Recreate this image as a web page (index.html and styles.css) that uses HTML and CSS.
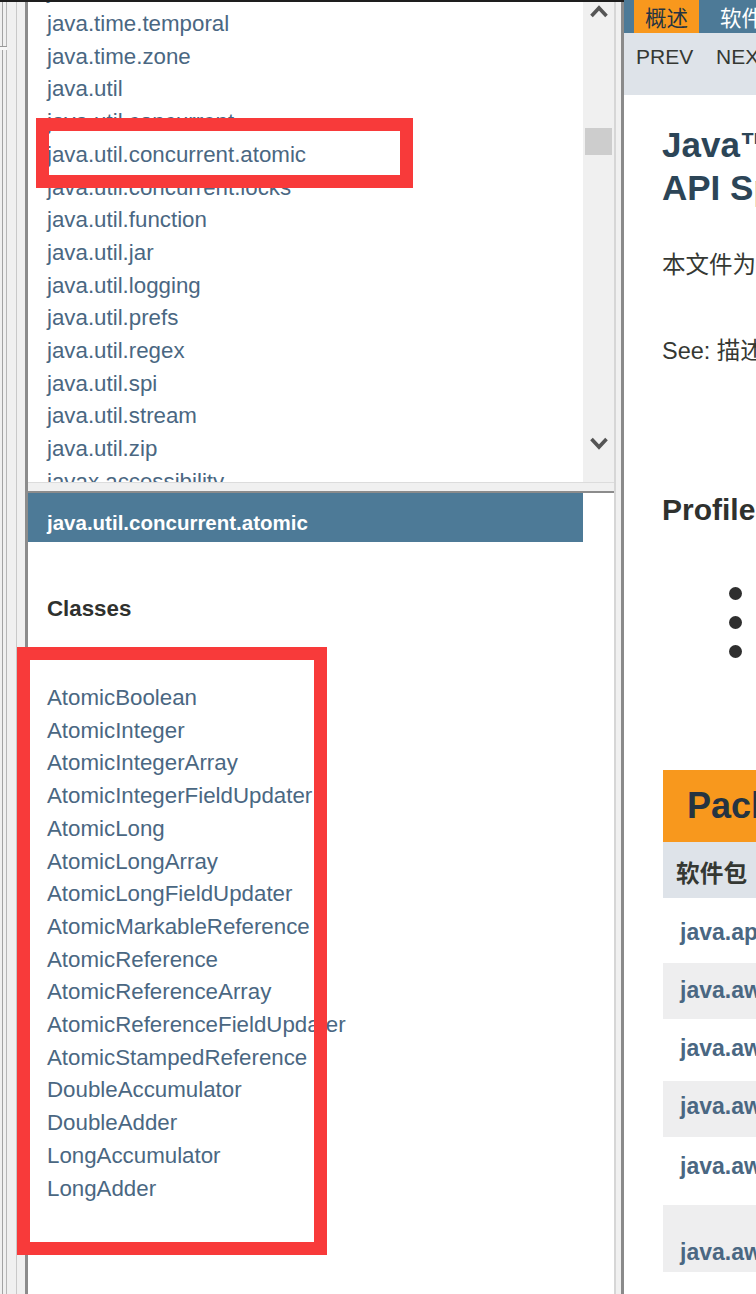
FILE: index.html
```html
<!DOCTYPE html>
<html lang="zh">
<head>
<meta charset="utf-8">
<title>Java Platform SE 8</title>
<link rel="stylesheet" href="styles.css">
</head>
<body>
<div class="window">
  <div class="left-side">
    <div class="gutter"><div class="gutter-cap"></div></div>
    <div class="frames">
      <div class="pkg-frame">
        <div class="pkg-list">
          <ul>
            <li>java.time.format</li>
            <li>java.time.temporal</li>
            <li>java.time.zone</li>
            <li>java.util</li>
            <li>java.util.concurrent</li>
            <li>java.util.concurrent.atomic</li>
            <li>java.util.concurrent.locks</li>
            <li>java.util.function</li>
            <li>java.util.jar</li>
            <li>java.util.logging</li>
            <li>java.util.prefs</li>
            <li>java.util.regex</li>
            <li>java.util.spi</li>
            <li>java.util.stream</li>
            <li>java.util.zip</li>
            <li>javax.accessibility</li>
          </ul>
        </div>
        <div class="scrollbar">
          <div class="sb-up">
            <svg width="20" height="16" viewBox="0 0 20 16"><polyline points="2.5,13 10,5 17.5,13" fill="none" stroke="#555" stroke-width="3.6"/></svg>
          </div>
          <div class="sb-track"><div class="sb-thumb"></div></div>
          <div class="sb-down">
            <svg width="20" height="16" viewBox="0 0 20 16"><polyline points="2.5,4 10,12 17.5,4" fill="none" stroke="#555" stroke-width="3.6"/></svg>
          </div>
        </div>
      </div>
      <div class="frame-split"></div>
      <div class="class-frame">
        <div class="class-bar-row">
          <div class="class-bar">java.util.concurrent.atomic</div>
        </div>
        <h2 class="classes-title">Classes</h2>
        <ul class="class-list">
          <li>AtomicBoolean</li>
          <li>AtomicInteger</li>
          <li>AtomicIntegerArray</li>
          <li>AtomicIntegerFieldUpdater</li>
          <li>AtomicLong</li>
          <li>AtomicLongArray</li>
          <li>AtomicLongFieldUpdater</li>
          <li>AtomicMarkableReference</li>
          <li>AtomicReference</li>
          <li>AtomicReferenceArray</li>
          <li>AtomicReferenceFieldUpdater</li>
          <li>AtomicStampedReference</li>
          <li>DoubleAccumulator</li>
          <li>DoubleAdder</li>
          <li>LongAccumulator</li>
          <li>LongAdder</li>
        </ul>
      </div>
    </div>
    <div class="divider"></div>
  </div>

  <div class="doc">
    <div class="doc-inner">
      <div class="topnav">
        <span class="tab active">概述</span>
        <span class="tab">软件包</span>
        <span class="tab">类</span>
        <span class="tab">使用</span>
      </div>
      <div class="subnav">
        <span class="sub-link">PREV</span>
        <span class="sub-link">NEXT</span>
        <span class="sub-link">FRAMES</span>
      </div>
      <div class="doc-body">
        <h1 class="title">Java™ Platform, Standard Edition 8<br>API Specification</h1>
        <p class="desc">本文件为 Java™ 平台标准版 8 的 API 规范。</p>
        <p class="see">See: 描述</p>
        <h2 class="profiles">Profiles</h2>
        <ul class="profile-list">
          <li><span class="bullet"></span>compact1</li>
          <li><span class="bullet"></span>compact2</li>
          <li><span class="bullet"></span>compact3</li>
        </ul>
        <table class="pkg-table">
          <caption><span class="cap-tab">Packages</span></caption>
          <thead>
            <tr><th class="col-first">软件包</th><th class="col-last">描述</th></tr>
          </thead>
          <tbody>
            <tr class="row-a"><td class="col-first">java.applet</td><td>提供创建applet所需的类和applet用来与其applet上下文进行通信的类。</td></tr>
            <tr class="row-b alt"><td class="col-first">java.awt</td><td>包含用于创建用户界面和绘制图形和图像的所有类。</td></tr>
            <tr class="row-c"><td class="col-first">java.awt.color</td><td>提供颜色空间的类。</td></tr>
            <tr class="row-d alt"><td class="col-first">java.awt.datatransfer</td><td>提供用于在应用程序之间和之间传输数据的接口和类。</td></tr>
            <tr class="row-e"><td class="col-first">java.awt.dnd</td><td>拖放是在许多图形用户界面系统中发现的直接操纵手势。</td></tr>
            <tr class="row-f alt"><td class="col-first">java.awt.event</td><td>提供用于处理AWT组件触发的不同类型事件的接口和类。</td></tr>
            <tr class="row-g"><td class="col-first">java.awt.font</td><td>提供与字体相关的类和接口。</td></tr>
          </tbody>
        </table>
      </div>
    </div>
  </div>

  <div class="mark mark-pkg"></div>
  <div class="mark mark-classes"></div>
</div>
</body>
</html>
```

FILE: styles.css
```css
* { box-sizing: border-box; }

html, body {
  margin: 0;
  padding: 0;
}

body {
  width: 756px;
  height: 1294px;
  overflow: hidden;
  background: #ffffff;
  font-family: "Liberation Sans", Arial, "Noto Sans CJK SC", sans-serif;
  color: #353833;
}

.window {
  position: relative;
  display: flex;
  width: 756px;
  height: 1294px;
}

/* ---------- left side (frames) ---------- */
.left-side {
  display: flex;
  flex: none;
  width: 624px;
  height: 1294px;
  border-top: 2px solid #1e1e1e;
}

.gutter {
  flex: none;
  width: 28px;
  background: linear-gradient(to right,
    #f0f0f0 0 2px,
    #a3a3a3 2px 3px,
    #f0f0f0 3px 6px,
    #b6b6b6 6px 7px,
    #f0f0f0 7px 16px,
    #c9c9c9 16px 17px,
    #f0f0f0 17px 25px,
    #8c8c8c 25px 28px);
}

.gutter-cap {
  width: 7px;
  height: 45px;
  border-bottom: 1px solid #9a9a9a;
  box-shadow: 0 3px 0 #f7f7f7;
}

.frames {
  flex: none;
  width: 586px;
  display: flex;
  flex-direction: column;
}

.pkg-frame {
  flex: none;
  height: 480px;
  display: flex;
}

.pkg-list {
  flex: 1;
  overflow: hidden;
  padding-left: 19px;
}

.pkg-list ul,
.class-list {
  list-style: none;
  margin: 0;
  padding: 0;
}

.pkg-list ul {
  margin-top: -26.7px;
}

.pkg-list li,
.class-list li {
  font-size: 22.3px;
  line-height: 32.7px;
  color: #4a6782;
  white-space: nowrap;
}

.scrollbar {
  flex: none;
  width: 31px;
  background: #f0f0f0;
  display: flex;
  flex-direction: column;
}

.sb-up {
  height: 22px;
  padding-top: 1px;
  display: flex;
  justify-content: center;
  align-items: flex-start;
}

.sb-track {
  flex: 1;
  padding: 104px 2px 0;
}

.sb-thumb {
  height: 27px;
  background: #cdcdcd;
}

.sb-down {
  height: 48px;
  padding-top: 1px;
  display: flex;
  justify-content: center;
  align-items: flex-start;
}

.frame-split {
  flex: none;
  height: 11px;
  background: #f0f0f0;
  border-top: 1px solid #dcdcdc;
  border-bottom: 2px solid #8c8c8c;
}

.class-frame {
  flex: 1;
  overflow: hidden;
}

.class-bar-row {
  display: flex;
}

.class-bar {
  width: 555px;
  height: 49px;
  background: #4d7a97;
  color: #ffffff;
  font-weight: bold;
  font-size: 20.5px;
  line-height: 38px;
  padding: 11px 0 0 19px;
  white-space: nowrap;
}

.classes-title {
  margin: 52px 0 0 19px;
  font-size: 22.3px;
  line-height: 30px;
  font-weight: bold;
  color: #2f312e;
}

.class-list {
  margin: 58px 0 0 19px;
}

.divider {
  flex: none;
  width: 10px;
  background: #f0f0f0;
  border-left: 2px solid #d6d6d6;
  border-right: 3px solid #8a8a8a;
}

/* ---------- right side (document) ---------- */
.doc {
  flex: 1;
  overflow: hidden;
}

.doc-inner {
  width: 900px;
}

.topnav {
  display: flex;
  height: 33px;
  background: #4d7a97;
  padding-left: 10px;
  white-space: nowrap;
}

.tab {
  font-family: "Noto Sans CJK SC", sans-serif;
  font-size: 21.5px;
  line-height: 33px;
  color: #ffffff;
  margin-right: 21px;
}

.tab.active {
  width: 65px;
  padding-left: 11px;
  background: #f8981d;
  color: #253441;
}

.subnav {
  height: 62px;
  background: #dee3e9;
  padding: 7px 0 0 12px;
  font-size: 21px;
  line-height: 34px;
  white-space: nowrap;
}

.sub-link {
  color: #353833;
  margin-right: 17px;
}

.doc-body {
  padding-left: 38px;
}

.title {
  margin: 28px 0 0;
  font-size: 35px;
  line-height: 43px;
  font-weight: bold;
  color: #2c4557;
  white-space: nowrap;
}

.desc {
  margin: 39px 0 0;
  font-size: 23.5px;
  line-height: 34px;
  white-space: nowrap;
}

.see {
  margin: 52px 0 0;
  font-size: 23.5px;
  line-height: 34px;
  white-space: nowrap;
}

.profiles {
  margin: 122px 0 0;
  font-size: 30px;
  line-height: 40px;
  font-weight: bold;
  color: #2f312e;
}

.profile-list {
  list-style: none;
  margin: 49px 0 0;
  padding: 0;
}

.profile-list li {
  display: flex;
  align-items: center;
  height: 29px;
  font-size: 23.5px;
  color: #4a6782;
}

.bullet {
  width: 13px;
  height: 13px;
  border-radius: 50%;
  background: #2f2f2f;
  margin-left: 67px;
  margin-right: 14px;
}

.pkg-table {
  margin: 104px 0 0 1px;
  width: 820px;
  border-collapse: collapse;
  table-layout: fixed;
}

.pkg-table caption {
  text-align: left;
  padding: 0;
}

.cap-tab {
  display: block;
  width: 320px;
  height: 72px;
  background: #f8981d;
  color: #253441;
  font-size: 36px;
  font-weight: bold;
  line-height: 69px;
  padding: 1px 0 0 24px;
  white-space: nowrap;
}

.pkg-table th {
  height: 56px;
  background: #dee3e9;
  text-align: left;
  font-size: 23.7px;
  font-weight: bold;
  color: #353833;
  padding: 4px 0 0 13px;
  white-space: nowrap;
}

.pkg-table th.col-first { width: 330px; }

.pkg-table td {
  vertical-align: top;
  padding: 14px 0 0 17px;
  font-size: 23px;
  line-height: 30px;
  color: #353833;
  white-space: nowrap;
}

.pkg-table td.col-first {
  font-weight: bold;
  color: #4a6782;
}

.pkg-table tr.alt td { background: #eeeeef; }

.row-a td { height: 65px; padding-top: 19px; }
.row-b td { height: 56px; padding-top: 12px; }
.row-c td { height: 62px; padding-top: 14px; }
.row-d td { height: 56px; padding-top: 10px; }
.row-e td { height: 68px; padding-top: 14px; }
.row-f td { height: 67px; padding-top: 32px; }
.row-g td { height: 70px; padding-top: 30px; }

/* ---------- annotation overlays ---------- */
.mark {
  position: absolute;
  border: 13px solid #f83a3a;
}

.mark-pkg {
  left: 36px;
  top: 118px;
  width: 377px;
  height: 70px;
}

.mark-classes {
  left: 17px;
  top: 647px;
  width: 310px;
  height: 608px;
}
```
